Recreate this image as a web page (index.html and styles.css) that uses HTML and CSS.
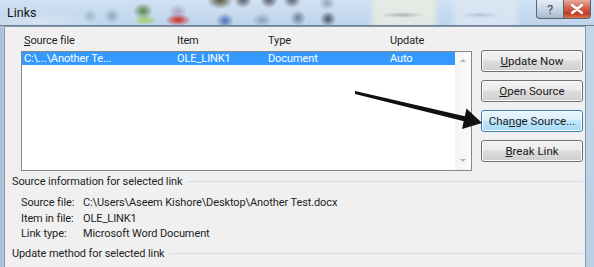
FILE: index.html
```html
<!DOCTYPE html>
<html lang="en">
<head>
  <meta charset="UTF-8" />
  <title>Links</title>
  <link rel="stylesheet" href="styles.css">
</head>
<body>

  <div class="window">

    <div class="titlebar">
      <div class="title">Links</div>
      <div class="caption-btns">
        <div class="cap-btn help">?</div>
        <div class="cap-btn close">
          <svg width="12" height="10" viewBox="0 0 12 10">
            <path d="M1 1 L11 9 M11 1 L1 9" stroke="#fff" stroke-width="2.6" stroke-linecap="round"/>
          </svg>
        </div>
      </div>
    </div>

    <div class="frame">
      <div class="client">

        <div class="top">
          <div class="list-col">
            <div class="cols headers">
              <span><u>S</u>ource file</span>
              <span>Item</span>
              <span>Type</span>
              <span>Update</span>
            </div>
            <div class="listbox">
              <div class="rows">
                <div class="cols row selected">
                  <span>C:\...\Another Te...</span>
                  <span>OLE_LINK1</span>
                  <span>Document</span>
                  <span>Auto</span>
                </div>
              </div>
              <div class="scrollbar">
                <span class="arr up"></span>
                <span class="arr down"></span>
              </div>
            </div>
          </div>

          <div class="buttons">
            <button class="btn"><u>U</u>pdate Now</button>
            <button class="btn"><u>O</u>pen Source</button>
            <button class="btn hover">Cha<u>n</u>ge Source...</button>
            <button class="btn"><u>B</u>reak Link</button>
          </div>
        </div>

        <div class="group-head">
          <span>Source information for selected link</span>
          <div class="rule"></div>
        </div>
        <div class="info">
          <span>Source file:</span><span>C:\Users\Aseem Kishore\Desktop\Another Test.docx</span>
          <span>Item in file:</span><span>OLE_LINK1</span>
          <span>Link type:</span><span>Microsoft Word Document</span>
        </div>
        <div class="group-head last">
          <span>Update method for selected link</span>
          <div class="rule"></div>
        </div>

      </div>
    </div>
  </div>

  <!-- annotation arrow drawn over the dialog -->
  <svg class="pointer" width="594" height="267" viewBox="0 0 594 267">
    <path d="M355 91 L466 116.5 L465 121.5 L355 94 Z" fill="#111"/>
    <polygon points="482,123 466.5,108.5 462,129" fill="#111"/>
  </svg>

</body>
</html>
```

FILE: styles.css
```css
:root {
  --face: #f0f0f0;
  --text: #1e1e1e;
  --select: #3399ff;
  --rule: #d5dfe5;
}

* {
  box-sizing: border-box;
  margin: 0;
  padding: 0;
}

body {
  width: 594px;
  height: 267px;
  overflow: hidden;
  position: relative;
  font-family: Roboto, "Noto Sans", sans-serif;
  font-size: 11px;
  letter-spacing: -0.1px;
  color: var(--text);
  background-color: #bcd2ea;
}

.window {
  display: flex;
  flex-direction: column;
  height: 267px;
}

/* aero glass title bar with blurred toolbar behind it */
.titlebar {
  height: 26px;
  display: flex;
  justify-content: space-between;
  align-items: flex-start;
  border-bottom: 1px solid #6f8194;
  background:
    radial-gradient(ellipse 10px 8px at 143px 11px, rgba(80,125,60,0.8) 15%, transparent),
    radial-gradient(ellipse 12px 5px at 145px 20px, rgba(150,205,60,0.7) 15%, transparent),
    radial-gradient(ellipse 13px 6px at 178px 20px, rgba(205,45,35,0.85) 20%, transparent),
    radial-gradient(ellipse 9px 8px at 178px 12px, rgba(150,110,150,0.45) 15%, transparent),
    radial-gradient(ellipse 13px 9px at 220px 0, rgba(95,95,70,0.9) 20%, transparent),
    radial-gradient(ellipse 9px 8px at 243px 0, rgba(80,85,95,0.8) 20%, transparent),
    radial-gradient(ellipse 9px 8px at 269px 0, rgba(80,85,95,0.8) 20%, transparent),
    radial-gradient(ellipse 9px 8px at 292px 0, rgba(80,85,95,0.75) 20%, transparent),
    radial-gradient(ellipse 9px 8px at 225px 21px, rgba(50,90,170,0.7) 15%, transparent),
    radial-gradient(ellipse 10px 7px at 262px 20px, rgba(90,110,140,0.45) 15%, transparent),
    radial-gradient(ellipse 8px 8px at 298px 18px, rgba(70,90,120,0.6) 15%, transparent),
    radial-gradient(ellipse 8px 8px at 328px 19px, rgba(55,65,85,0.75) 15%, transparent),
    radial-gradient(ellipse 8px 7px at 327px 3px, rgba(110,130,160,0.55) 15%, transparent),
    radial-gradient(ellipse 8px 8px at 112px 16px, rgba(110,140,170,0.55) 15%, transparent),
    radial-gradient(ellipse 7px 7px at 90px 16px, rgba(120,150,180,0.45) 15%, transparent),
    radial-gradient(ellipse 22px 3px at 402px 15px, rgba(120,130,140,0.5), transparent),
    radial-gradient(ellipse 20px 3px at 480px 15px, rgba(130,145,165,0.4), transparent),
    linear-gradient(90deg, transparent 368px, rgba(234,238,226,0.8) 376px, rgba(234,238,226,0.8) 432px, transparent 440px, transparent 450px, rgba(222,232,244,0.75) 458px, rgba(222,232,244,0.75) 514px, transparent 522px),
    radial-gradient(ellipse 60px 10px at 40px 22px, rgba(255,255,255,0.35), transparent),
    linear-gradient(#cfe1f3, #bfd4eb);
}

.title {
  font-size: 12.5px;
  letter-spacing: 0;
  color: #141414;
  padding: 5px 0 0 7px;
}

.caption-btns {
  display: flex;
  margin-right: 3px;
}

.cap-btn {
  height: 19px;
  display: flex;
  align-items: center;
  justify-content: center;
  border: 1px solid #5b6675;
  border-top: none;
}

.help {
  width: 27px;
  border-radius: 0 0 0 4px;
  border-right: none;
  color: #3c4a5a;
  font-size: 13px;
  background: linear-gradient(#e6edf5, #c9d6e4 50%, #a9bace);
}

.close {
  width: 28px;
  border-radius: 0 0 4px 0;
  background: linear-gradient(#e8a99a, #cf5a45 50%, #bf3a28 75%, #d9774f);
}

.frame {
  flex: 1;
  display: flex;
  padding: 0 8px 0 4px;
  background: linear-gradient(90deg, #a8bed6 0, #b7cbe0 4px, transparent 4px),
              linear-gradient(#c2d6ea, #b9cfe6);
}

.client {
  flex: 1;
  background-color: var(--face);
  border: 1px solid #8497ab;
  border-bottom: none;
  display: flex;
  flex-direction: column;
}

.top {
  display: flex;
  gap: 9px;
  padding: 6px 2px 0 16px;
}

.list-col {
  width: 451px;
}

.cols {
  display: grid;
  grid-template-columns: 153px 91px 122px 1fr;
  padding-left: 3px;
  white-space: nowrap;
}

.headers {
  height: 18px;
  line-height: 16px;
}

.listbox {
  height: 120px;
  display: flex;
  background-color: #fff;
  border: 1px solid #828790;
}

.rows {
  flex: 1;
}

.row {
  height: 13px;
  line-height: 13px;
  padding-left: 2px;
}

.row.selected {
  background-color: var(--select);
  color: #fff;
}

.scrollbar {
  width: 16px;
  display: flex;
  flex-direction: column;
  justify-content: space-between;
  align-items: center;
  padding: 7px 0 8px;
  background: linear-gradient(90deg, #f4f4f4, #fafafa);
}

.arr {
  width: 0;
  height: 0;
  border-left: 3px solid transparent;
  border-right: 3px solid transparent;
}

.arr.up {
  border-bottom: 3px solid #b0b4b8;
}

.arr.down {
  border-top: 3px solid #b0b4b8;
}

.buttons {
  width: 102px;
  display: flex;
  flex-direction: column;
  gap: 8px;
  padding-top: 17px;
}

.btn {
  height: 22px;
  font-family: inherit;
  font-size: 11.5px;
  color: #1a1a1a;
  border: 1px solid #707070;
  border-radius: 3px;
  box-shadow: inset 0 0 0 1px #fbfbfb;
  background: linear-gradient(#f2f2f2, #ebebeb 45%, #dddddd 50%, #cfcfcf);
}

.btn.hover {
  border-color: #3c7fb1;
  box-shadow: inset 0 0 0 1px #fcfeff;
  background: linear-gradient(#eaf6fd, #d9f0fc 45%, #bee6fd 50%, #a7d9f5);
}

.group-head {
  display: flex;
  align-items: center;
  gap: 5px;
  padding: 3px 2px 0 7px;
  line-height: 15px;
}

.group-head .rule {
  flex: 1;
  height: 1px;
  background-color: var(--rule);
}

.group-head.last {
  padding-top: 4px;
}

.info {
  display: grid;
  grid-template-columns: 62px 1fr;
  padding: 6px 0 0 16px;
  line-height: 15.5px;
}

.pointer {
  position: absolute;
  left: 0;
  top: 0;
  pointer-events: none;
}
```
